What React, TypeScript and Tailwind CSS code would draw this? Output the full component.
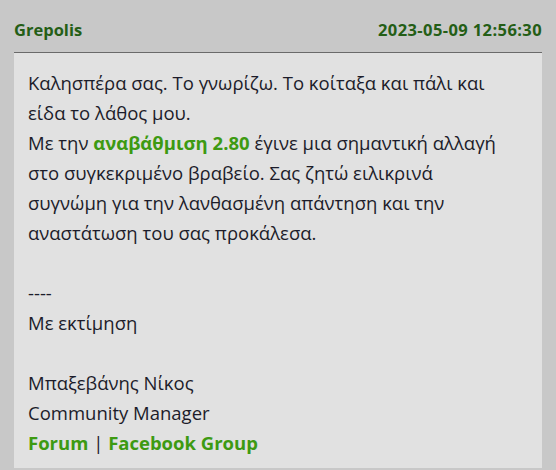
import React from 'react';

const App = () => {
  return (
    <div className="w-[556px] h-[470px] bg-[#c8c8c8] px-[14px] pb-[2px] flex flex-col" style={{ fontFamily: '"Open Sans", sans-serif' }}>
      <div className="flex justify-between items-end h-[53px] pb-[9px] border-b border-[#6a6a6a] text-[16.5px] font-bold text-[#245e16] whitespace-nowrap">
        <span>Grepolis</span>
        <span className="tracking-[0.4px]">2023-05-09 12:56:30</span>
      </div>
      <div className="flex-1 bg-[#e1e1e1] px-[14px] pt-[15px] text-[18.5px] leading-[30px] text-[#1c1c2a] whitespace-nowrap">
        <p>
          Καλησπέρα σας. Το γνωρίζω. Το κοίταξα και πάλι και
          <br />
          είδα το λάθος μου.
        </p>
        <p>
          Με την <span className="font-bold text-[#3d9a12]">αναβάθμιση 2.80</span> έγινε μια σημαντική αλλαγή
          <br />
          στο συγκεκριμένο βραβείο. Σας ζητώ ειλικρινά
          <br />
          συγνώμη για την λανθασμένη απάντηση και την
          <br />
          αναστάτωση του σας προκάλεσα.
        </p>
        <br />
        <p>----</p>
        <p>Με εκτίμηση</p>
        <br />
        <p>Μπαξεβάνης Νίκος</p>
        <p>Community Manager</p>
        <p className="font-bold text-[#3d9a12]">
          <a href="#">Forum</a> <span className="font-normal text-[#1c1c2a]">|</span> <a href="#">Facebook Group</a>
        </p>
      </div>
    </div>
  );
};

export default App;
